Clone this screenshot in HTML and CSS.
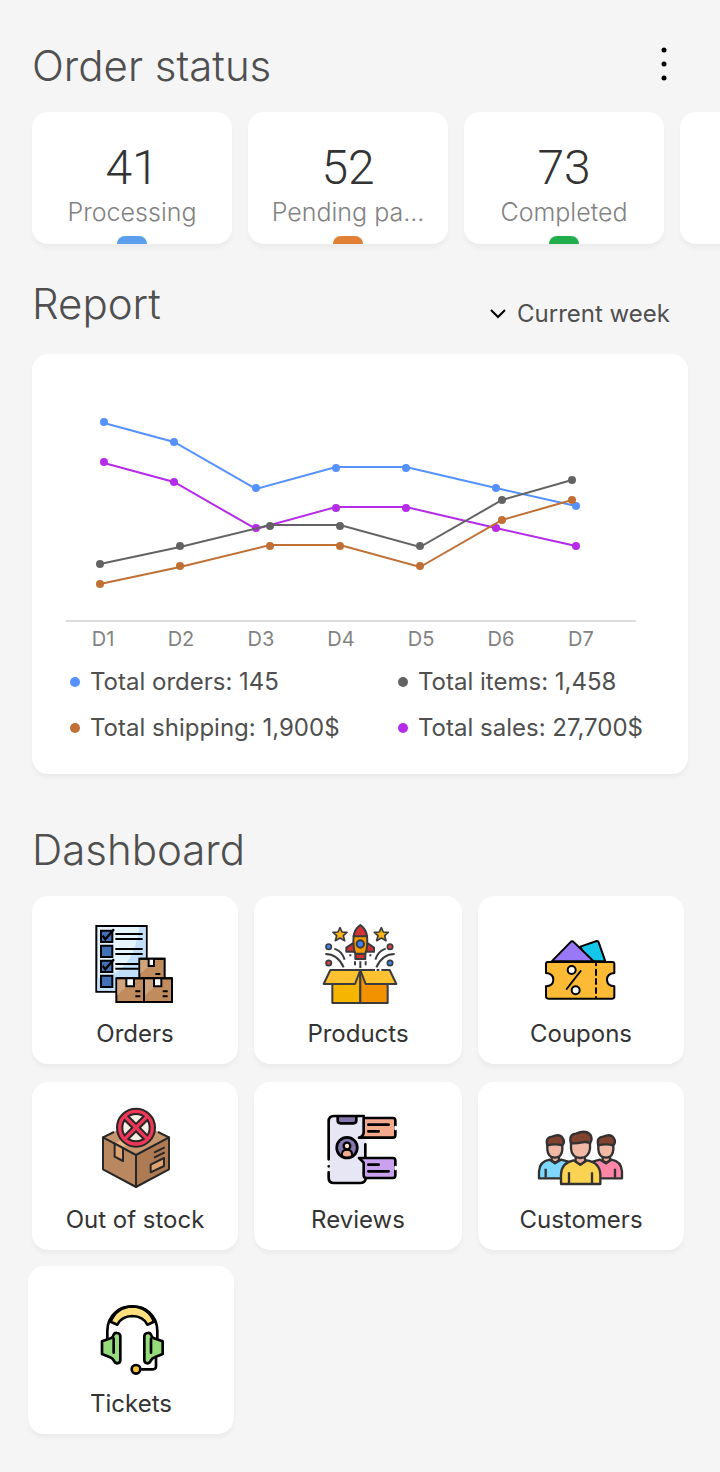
FILE: index.html
```html
<!DOCTYPE html>
<html lang="en">
<head>
<meta charset="utf-8">
<meta name="viewport" content="width=device-width, initial-scale=1">
<title>Store overview</title>
<link rel="stylesheet" href="styles.css">
</head>
<body>
<main class="page">
  <section>
    <header class="section-head">
      <h1 class="title">Order status</h1>
      <button class="menu-button" type="button" aria-label="More options">
        <svg width="8" height="36" viewBox="0 0 8 36" aria-hidden="true"><circle cx="4" cy="4" r="2.5"/><circle cx="4" cy="18" r="2.5"/><circle cx="4" cy="32" r="2.5"/></svg>
      </button>
    </header>
    <ul class="status-list">
      <li class="card status status-blue"><span class="status-count">41</span><span class="status-name">Processing</span></li>
      <li class="card status status-orange"><span class="status-count">52</span><span class="status-name">Pending pa...</span></li>
      <li class="card status status-green"><span class="status-count">73</span><span class="status-name">Completed</span></li>
      <li class="card status"></li>
    </ul>
  </section>

  <section class="report">
    <header class="section-head">
      <h2 class="title">Report</h2>
      <label class="period">
        <svg width="18" height="12" viewBox="0 0 18 12" aria-hidden="true"><path d="M2 2l7 7 7-7"/></svg>
        <select class="period-select" aria-label="Report period"><option>Current week</option></select>
      </label>
    </header>
    <div class="card report-card">
      <svg class="chart" viewBox="32 354 656 304" role="img" aria-label="Orders, items, shipping and sales by day">
        <path class="axis" d="M66 621H636"/>
        <g class="series blue">
          <path d="M104 423L174 442L256 489L336 467H406L496 488L576 506"/>
          <circle cx="104" cy="422" r="4"/><circle cx="174" cy="442" r="4"/><circle cx="256" cy="488" r="4"/><circle cx="336" cy="468" r="4"/><circle cx="406" cy="468" r="4"/><circle cx="496" cy="488" r="4"/><circle cx="576" cy="506" r="4"/>
        </g>
        <g class="series purple">
          <path d="M104 463L174 482L256 529L336 507H406L496 528L576 546"/>
          <circle cx="104" cy="462" r="4"/><circle cx="174" cy="482" r="4"/><circle cx="256" cy="528" r="4"/><circle cx="336" cy="508" r="4"/><circle cx="406" cy="508" r="4"/><circle cx="496" cy="528" r="4"/><circle cx="576" cy="546" r="4"/>
        </g>
        <g class="series gray">
          <path d="M100 564L180 547L270 525H340L420 547L502 500L572 480"/>
          <circle cx="100" cy="564" r="4"/><circle cx="180" cy="546" r="4"/><circle cx="270" cy="526" r="4"/><circle cx="340" cy="526" r="4"/><circle cx="420" cy="546" r="4"/><circle cx="502" cy="500" r="4"/><circle cx="572" cy="480" r="4"/>
        </g>
        <g class="series brown">
          <path d="M100 584L180 567L270 545H340L420 567L502 520L572 500"/>
          <circle cx="100" cy="584" r="4"/><circle cx="180" cy="566" r="4"/><circle cx="270" cy="546" r="4"/><circle cx="340" cy="546" r="4"/><circle cx="420" cy="566" r="4"/><circle cx="502" cy="520" r="4"/><circle cx="572" cy="500" r="4"/>
        </g>
        <g class="days">
          <text x="103" y="646">D1</text><text x="181" y="646">D2</text><text x="261" y="646">D3</text><text x="341" y="646">D4</text><text x="421" y="646">D5</text><text x="501" y="646">D6</text><text x="581" y="646">D7</text>
        </g>
      </svg>
      <ul class="legend">
        <li class="legend-item blue">Total orders: 145</li>
        <li class="legend-item gray">Total items: 1,458</li>
        <li class="legend-item brown">Total shipping: 1,900$</li>
        <li class="legend-item purple">Total sales: 27,700$</li>
      </ul>
    </div>
  </section>

  <section class="dashboard">
    <header class="section-head">
      <h2 class="title">Dashboard</h2>
    </header>
    <nav class="tiles" aria-label="Dashboard">
      <a class="card tile" href="#orders">
        <svg class="icon" viewBox="0 3 330 300" stroke="#000" stroke-width="6" aria-hidden="true">
          <path d="M49 33H200V230H49Z" fill="#e6f4ff"/>
          <path d="M178 36H197V227H52V190Q160 180 178 36Z" fill="#bfdffb" stroke="none"/>
          <g fill="#4272b5"><path d="M63 47H97V81H63ZM63 92H97V126H63ZM63 137H97V171H63ZM63 182H97V216H63Z"/></g>
          <path d="M68 62l8 11 26-30M68 152l8 11 26-30" fill="none" stroke-width="7"/>
          <path d="M106 57H188M106 72H188M106 102H188M106 117H188M106 147H176M106 161H176" fill="none"/>
          <g fill="#c08c5d"><path d="M178 131H254V190H178ZM109 190H192V261H109ZM192 190H276V261H192Z"/></g>
          <path d="M181 134H230L181 176ZM112 193H166L112 240ZM195 193H250L195 240Z" fill="#cfa47c" stroke="none"/>
          <path d="M206 131V153H222V131M139 190V214H162V190M222 190V214H244V190" fill="#fff"/>
          <path d="M178 131H254M109 190H276M226 177H241M166 229H181M166 244H181M248 229H263M248 244H263" fill="none"/>
        </svg>
        <span class="tile-name">Orders</span>
      </a>
      <a class="card tile" href="#products">
        <svg class="icon" viewBox="-6 3 330 300" stroke="#3a3b3f" stroke-width="6" stroke-linejoin="round" aria-hidden="true">
          <path d="M82 167H166V264H82Z" fill="#f6b500"/>
          <path d="M166 167H248V264H166Z" fill="#f39200"/>
          <path d="M76 165H166L150 207H56Z" fill="#fec12f"/>
          <path d="M166 165H254L274 207H182Z" fill="#fec12f"/>
          <path d="M210 165h5m8 0h6" stroke="#fff"/>
          <path d="M148 82L124 98V110H151M184 82L207 98V110H181M151 116H181V132H151Z" fill="#cf3030"/>
          <path d="M146 62Q143 96 151 116H181Q189 96 186 62Z" fill="#f59c00"/>
          <path d="M166 30Q148 43 146 64H186Q184 43 166 30Z" fill="#d43333"/>
          <circle cx="166" cy="87" r="11" fill="#3e84f3"/>
          <path d="M150 139V151M166 139V159M182 139V151M133 121H139M193 121H199" fill="none"/>
          <g fill="#fbb516" stroke-width="5"><path d="M105 38l6 13 15 1-11 10 4 15-14-8-14 8 4-15-11-10 15-1z"/><path d="M229 38l6 13 15 1-11 10 4 15-14-8-14 8 4-15-11-10 15-1z"/></g>
          <g fill="#3e84f3" stroke-width="5"><circle cx="71" cy="95" r="8"/><circle cx="255" cy="144" r="8"/></g>
          <g fill="#d64545" stroke-width="5"><circle cx="71" cy="144" r="8"/><circle cx="255" cy="95" r="8"/></g>
          <path d="M88 101Q111 108 119 134M61 117Q98 117 116 157M242 101Q219 108 211 134M269 117Q232 117 214 157" fill="none"/>
        </svg>
        <span class="tile-name">Products</span>
      </a>
      <a class="card tile" href="#coupons">
        <svg class="icon" viewBox="3 3 330 300" stroke="#000" stroke-width="6" stroke-linejoin="round" stroke-linecap="round" aria-hidden="true">
          <path d="M166 95L215 78Q219 77 221 82L241 139H190Z" fill="#14c6ea"/>
          <path d="M80 139L136 82Q141 76 147 82L206 139Z" fill="#9979f6"/>
          <path d="M68 141H262Q268 141 268 147V174Q246 176 246 194Q246 212 268 214V244Q268 251 262 251H70Q63 251 63 244V214Q85 212 85 194Q85 176 63 174V147Q63 141 68 141Z" fill="#fdbb35"/>
          <path d="M213 145V151M213 164V180M213 192V207M213 220V234M213 246V249M167 168L125 222" fill="none"/>
          <circle cx="140" cy="165" r="12" fill="#fff"/><circle cx="152" cy="226" r="12" fill="#fff"/>
        </svg>
        <span class="tile-name">Coupons</span>
      </a>
      <a class="card tile" href="#out-of-stock">
        <svg class="icon" viewBox="0 6 330 300" stroke="#282727" stroke-width="6" stroke-linejoin="round" aria-hidden="true">
          <path d="M69 112L168 62L267 112L168 165Z" fill="#c7966e" stroke="none"/>
          <path d="M69 112L168 165V261L69 208Z" fill="#b98860"/>
          <path d="M267 112L168 165V261L267 208Z" fill="#ae7a53"/>
          <path d="M69 112L102 96M267 112L234 96" fill="none"/>
          <path d="M108 129L126 118L148 132L130 142Z" fill="#e6b386" stroke="none"/>
          <path d="M104 131V170L129 183V144Z" fill="#dda472"/>
          <path d="M222 158L254 142M222 173L254 157" fill="none"/>
          <path d="M212 194L252 174V198L212 217Z" fill="#dda472"/>
          <circle cx="168" cy="83" r="57" fill="#ee3656"/>
          <circle cx="168" cy="83" r="41" fill="#f8eee4"/>
          <path d="M140 55L196 111M196 55L140 111" stroke-width="22"/>
          <path d="M135 50L201 116M201 50L135 116" stroke="#ee3656" stroke-width="10"/>
        </svg>
        <span class="tile-name">Out of stock</span>
      </a>
      <a class="card tile" href="#reviews">
        <svg class="icon" viewBox="-6 6 330 300" stroke="#000" stroke-width="8" stroke-linejoin="round" stroke-linecap="round" aria-hidden="true">
          <rect x="71" y="48" width="111" height="201" rx="14" fill="#e7e6f5" stroke="none"/>
          <path d="M98 50V61Q98 70 107 70H145Q154 70 154 61V50" fill="#8377ad"/>
          <path d="M71 178V64Q71 48 87 48H176M71 217V234Q71 249 87 249H166Q178 249 182 238M71 199v.1M181 133V170" fill="none"/>
          <circle cx="126" cy="143" r="31" fill="#8377ad"/>
          <path d="M111 168V161Q112 149 126 149T141 161V168Q126 177 111 168Z" fill="#f4a98c" stroke-width="6"/>
          <circle cx="126" cy="138" r="10" fill="#fbe0d3" stroke-width="7"/>
          <path d="M176 54H264Q271 54 271 62V105Q271 113 264 113H162Q174 110 176 98Z" fill="#f4a98c"/>
          <path d="M162 174H264Q271 174 271 182V226Q271 234 264 234H184Q176 234 176 226V188Z" fill="#c9a1ef"/>
          <path d="M272 81V87M272 201V207" stroke="#fff"/>
          <path d="M190 74H251M190 94H221M190 194H221M190 214H251" fill="none"/>
        </svg>
        <span class="tile-name">Reviews</span>
      </a>
      <a class="card tile" href="#customers">
        <svg class="icon" viewBox="3 6 330 300" stroke="#323232" stroke-width="7" stroke-linejoin="round" aria-hidden="true">
          <path d="M42 235V214Q44 184 74 179L90 190L108 179L130 185V235Z" fill="#7ed8fd"/>
          <path d="M291 235V214Q289 184 259 179L243 190L225 179L203 185V235Z" fill="#fc85a8"/>
          <path d="M62 206V233M270 206V233" fill="none"/>
          <path d="M80 168V181L90 189L102 181V168M233 168V181L243 189L255 181V168" fill="#edac98"/>
          <path d="M67 130V148Q68 172 90 173Q111 172 112 148V130ZM220 130V148Q221 172 243 173Q264 172 265 148V130Z" fill="#f1b9a5"/>
          <path d="M67 136Q60 112 82 110Q105 99 115 117Q120 127 112 136Q90 130 67 136ZM220 136Q213 112 235 110Q258 99 268 117Q273 127 265 136Q243 130 220 136Z" fill="#81422f"/>
          <path d="M108 252V224Q109 188 146 181L166 194L186 181Q225 188 226 224V252Z" fill="#fbd352"/>
          <path d="M152 170V184L166 194L180 184V170" fill="#edac98"/>
          <path d="M138 120V146Q140 173 166 174Q192 173 195 146V120Z" fill="#f1b9a5"/>
          <path d="M138 130Q130 103 153 101Q182 88 196 104Q204 116 195 130Q184 124 172 127Q156 131 138 130Z" fill="#81422f"/>
          <path d="M132 217V250M201 217V250" fill="none"/>
        </svg>
        <span class="tile-name">Customers</span>
      </a>
    </nav>
    <nav class="tiles tiles-support" aria-label="Support">
      <a class="card tile" href="#tickets">
        <svg class="icon" viewBox="-12 -12 330 300" stroke="#000" stroke-width="8" stroke-linejoin="round" stroke-linecap="round" aria-hidden="true">
          <path d="M82 152V122C84 25 230 25 232 122V152" fill="none"/>
          <path d="M92 95Q109 51 157 49Q205 51 222 95L202 104Q190 79 157 78Q124 79 112 104Z" fill="#ffe07e"/>
          <path d="M66 154L92 145Q100 141 101 134Q104 128 111 129Q121 130 121 139V210Q121 220 111 220Q104 219 101 211Q98 205 90 202L66 192Z" fill="#96dc7b"/>
          <path d="M248 154L222 145Q214 141 213 134Q210 128 203 129Q193 130 193 139V210Q193 220 203 220Q210 219 213 211Q216 205 224 202L248 192Z" fill="#96dc7b"/>
          <path d="M101 146V188M213 146V188M228 202V230Q227 238 219 238H186" fill="none"/>
          <circle cx="168" cy="238" r="13" fill="#fdc32e"/>
        </svg>
        <span class="tile-name">Tickets</span>
      </a>
    </nav>
  </section>
</main>
</body>
</html>
```
FILE: styles.css
```css
* {
  box-sizing: border-box;
}

body {
  margin: 0;
  background: #f5f5f5;
  color: #333;
  font-family: Inter, "Liberation Sans", sans-serif;
  font-size: 24px;
  font-weight: 400;
  line-height: 32px;
}

ul {
  margin: 0;
  padding: 0;
  list-style: none;
}

.page {
  padding: 40px 0 38px;
  overflow: hidden;
}

.section-head {
  display: flex;
  align-items: center;
  justify-content: space-between;
  height: 52px;
  padding: 0 50px 0 32px;
}

.title {
  margin: 0;
  color: #4f4f4f;
  font-size: 42px;
  font-weight: 300;
  line-height: 52px;
}

.card {
  border-radius: 16px;
  background: #fff;
  box-shadow: 0 4px 4px rgba(0, 0, 0, 0.04);
}

.menu-button {
  display: flex;
  padding: 0 2px 4px;
  border: 0;
  background: none;
}

/* Order status */

.status-list {
  display: flex;
  gap: 16px;
  margin-top: 20px;
  padding-left: 32px;
}

.status {
  display: flex;
  flex: none;
  flex-direction: column;
  align-items: center;
  width: 200px;
  height: 132px;
  padding-top: 28px;
}

.status::after {
  width: 30px;
  height: 8px;
  margin-top: auto;
  border-radius: 8px 8px 0 0;
}

.status-blue::after {
  content: "";
  background: #5a9eed;
}

.status-orange::after {
  content: "";
  background: #e17f35;
}

.status-green::after {
  content: "";
  background: #1fae4b;
}

.status-count {
  font-family: Roboto, sans-serif;
  font-size: 48px;
  font-weight: 300;
  line-height: 56px;
}

.status-name {
  color: #828282;
  font-size: 25px;
  font-weight: 300;
}

/* Report */

.report {
  margin-top: 34px;
}

.period {
  display: flex;
  align-items: center;
  gap: 10px;
  padding-top: 20px;
}

.period path {
  fill: none;
  stroke: #000;
  stroke-width: 2;
}

.period-select {
  padding: 0;
  border: 0;
  appearance: none;
  background: none;
  color: #4f4f4f;
  font: inherit;
}

.report-card {
  margin: 24px 32px 0;
  padding-bottom: 30px;
}

.chart {
  display: block;
  width: 100%;
}

.axis {
  stroke: #dcdcdc;
  stroke-width: 2;
}

.series path {
  fill: none;
  stroke: currentColor;
  stroke-width: 2;
}

.series circle {
  fill: currentColor;
}

.blue {
  color: #5591ff;
}

.purple {
  color: #b62be8;
}

.gray {
  color: #636363;
}

.brown {
  color: #c07035;
}

.days {
  fill: #828282;
  font-size: 20px;
  text-anchor: middle;
}

.legend {
  display: grid;
  grid-template-columns: 1fr 1fr;
  row-gap: 14px;
  padding-top: 8px;
}

.legend-item {
  display: flex;
  align-items: center;
  gap: 10px;
  padding-left: 38px;
  white-space: nowrap;
  -webkit-text-fill-color: #4f4f4f;
}

.legend-item::before {
  content: "";
  width: 10px;
  height: 10px;
  border-radius: 50%;
  background: currentColor;
}

/* Dashboard */

.dashboard {
  margin-top: 50px;
}

.tiles {
  display: grid;
  grid-template-columns: 206fr 208fr 206fr;
  gap: 18px 16px;
  margin-top: 20px;
  padding: 0 36px 0 32px;
}

.tiles-support {
  margin-top: 16px;
  padding: 0 40px 0 28px;
}

.tile {
  display: flex;
  flex-direction: column;
  align-items: center;
  gap: 2px;
  padding: 20px 0 14px;
  color: #333;
  text-decoration: none;
}

.icon {
  width: 110px;
  height: 100px;
}
```
